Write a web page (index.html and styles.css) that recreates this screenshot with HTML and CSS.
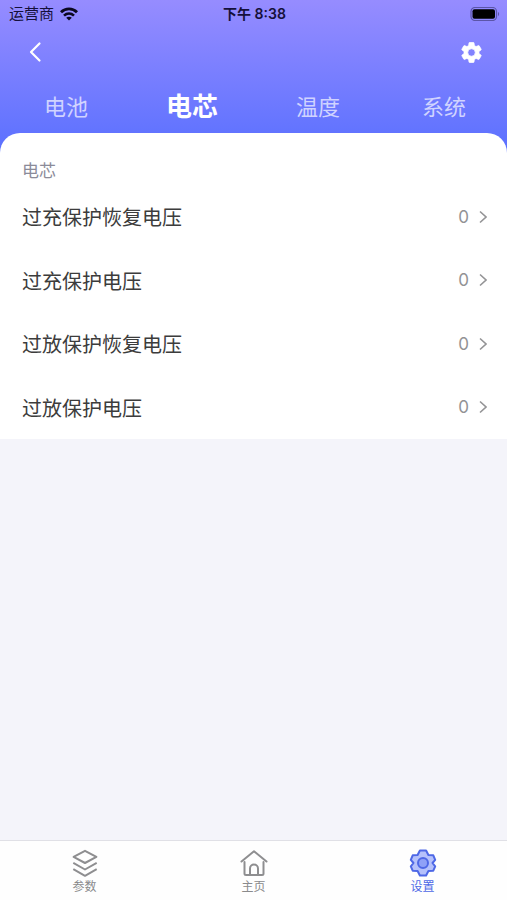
FILE: index.html
```html
<!DOCTYPE html>
<html lang="zh-CN">
<head>
<meta charset="utf-8">
<meta name="viewport" content="width=device-width, initial-scale=1">
<title>电芯</title>
<link rel="stylesheet" href="styles.css">
</head>
<body>
<header class="header">
  <div class="status">
    <div class="carrier">
      <span>运营商</span>
      <svg class="wifi" viewBox="0 0 18 14" aria-hidden="true">
        <path d="M1 5.200C5.600 .8 12.400 .8 17 5.200" fill="none" stroke="#0b0820" stroke-width="2.900"/>
        <path d="M4 8.600C6.900 5.900 11.100 5.900 14 8.600" fill="none" stroke="#0b0820" stroke-width="2.600"/>
        <path d="M9 13.600 6.200 10.800C7.800 9.400 10.200 9.400 11.800 10.800Z" fill="#0b0820"/>
      </svg>
    </div>
    <time class="clock">下午 8:38</time>
    <svg class="battery" viewBox="0 0 30 14" aria-hidden="true">
      <rect x="1" y=".5" width="25.500" height="13" rx="4" fill="none" stroke="#5b55a8" stroke-width="1.200"/>
      <rect x="2.500" y="2.200" width="22.500" height="9.600" rx="2" fill="#000"/>
      <path d="M28 5c1.500.5 1.500 3.500 0 4z" fill="#5b55a8"/>
    </svg>
  </div>
  <div class="bar">
    <button class="icon-button" aria-label="返回">
      <svg width="24" height="24" viewBox="0 0 24 24"><path d="M16.500 3.500 8 12 16.500 20.500" fill="none" stroke="#fff" stroke-width="2.200" stroke-linecap="round" stroke-linejoin="round"/></svg>
    </button>
    <button class="icon-button" aria-label="设置选项">
      <svg width="25" height="25" viewBox="0 0 24 24"><path fill="#fff" stroke="#fff" stroke-width=".7" stroke-linejoin="round" d="M19.140 12.940c.040-.3.060-.61.060-.94s-.02-.64-.07-.94l2.030-1.580c.18-.14.23-.41.12-.61l-1.920-3.320c-.12-.22-.37-.29-.59-.22l-2.390.96c-.5-.38-1.030-.7-1.620-.94l-.36-2.540c-.04-.24-.24-.41-.48-.41h-3.840c-.24 0-.43.17-.47.41l-.36 2.540c-.59.24-1.130.57-1.620.94l-2.390-.96c-.22-.08-.47 0-.59.22L2.740 8.870c-.12.21-.08.47.12.61l2.030 1.580c-.05.3-.09.63-.09.94s.02.64.07.94l-2.030 1.580c-.18.14-.23.41-.12.61l1.920 3.320c.12.22.37.29.59.22l2.390-.96c.5.38 1.030.7 1.620.94l.36 2.540c.05.24.24.41.48.41h3.840c.24 0 .44-.17.47-.41l.36-2.540c.59-.24 1.130-.56 1.620-.94l2.390.96c.22.08.47 0 .59-.22l1.920-3.320c.12-.22.07-.47-.12-.61zM12 15.600a3.600 3.600 0 1 1 0-7.200 3.600 3.600 0 0 1 0 7.200z"/></svg>
    </button>
  </div>
  <nav class="tabs" aria-label="分类">
    <a href="#">电池</a>
    <a href="#" class="active" aria-current="page">电芯</a>
    <a href="#">温度</a>
    <a href="#">系统</a>
  </nav>
</header>
<main class="panel">
  <h1 class="section-title">电芯</h1>
  <div class="rows">
    <button class="row"><span>过充保护恢复电压</span><span class="value">0<svg class="chevron" viewBox="0 0 8 14" aria-hidden="true"><path d="M1 1.500 7 7 1 12.500"/></svg></span></button>
    <button class="row"><span>过充保护电压</span><span class="value">0<svg class="chevron" viewBox="0 0 8 14" aria-hidden="true"><path d="M1 1.500 7 7 1 12.500"/></svg></span></button>
    <button class="row"><span>过放保护恢复电压</span><span class="value">0<svg class="chevron" viewBox="0 0 8 14" aria-hidden="true"><path d="M1 1.500 7 7 1 12.500"/></svg></span></button>
    <button class="row"><span>过放保护电压</span><span class="value">0<svg class="chevron" viewBox="0 0 8 14" aria-hidden="true"><path d="M1 1.500 7 7 1 12.500"/></svg></span></button>
  </div>
</main>
<nav class="tabbar" aria-label="主导航">
  <a href="#">
    <svg viewBox="0 0 28 28" aria-hidden="true"><g fill="none" stroke="#8e8e90" stroke-width="2" stroke-linejoin="round"><path d="M14 1.800 25.400 7.900 14 14 2.600 7.900Z"/><path d="M2.300 13.900 14 20.500 25.700 13.900"/><path d="M2.300 20.200 14 26.800 25.700 20.200"/></g></svg>
    <span>参数</span>
  </a>
  <a href="#">
    <svg viewBox="0 0 28 28" aria-hidden="true"><g fill="none" stroke="#8e8e90" stroke-width="2" stroke-linecap="round" stroke-linejoin="round"><path d="M1.500 12.500 14 2.300 26.500 12.500"/><path d="M4.500 13V24.500Q4.500 26 6 26H22Q23.500 26 23.500 24.500V13"/><path d="M10 25V19.500a4 4 0 0 1 8 0V25"/></g></svg>
    <span>主页</span>
  </a>
  <a href="#" class="active" aria-current="page">
    <svg viewBox="0 0 28 28" aria-hidden="true"><path d="M10.900 1.500H17.100L19.400 6 24.300 6.300 26.200 10.800 23.500 14 26.200 17.400 24.300 21.700 19.400 22 17.100 26.500H10.900L8.600 22 3.700 21.700 1.800 17.400 4.500 14 1.800 10.800 3.700 6.300 8.600 6Z" fill="#b5c1fb" stroke="#4e68e6" stroke-width="2" stroke-linejoin="round"/><circle cx="14" cy="14" r="5" fill="#8fa1f7" stroke="#4e68e6" stroke-width="2"/></svg>
    <span>设置</span>
  </a>
</nav>
</body>
</html>
```
FILE: styles.css
```css
* { box-sizing: border-box; }

body {
  margin: 0;
  min-height: 100vh;
  display: flex;
  flex-direction: column;
  background: #f4f4fa;
  font-family: Inter, "Noto Sans CJK SC", sans-serif;
  color: #3c3c3c;
}

a { color: inherit; text-decoration: none; }

button {
  border: 0;
  padding: 0;
  background: none;
  font: inherit;
  color: inherit;
  cursor: pointer;
}

svg { display: block; }

.header {
  padding-bottom: 20px;
  background: linear-gradient(#968cff, #5a70ff);
}

.status {
  display: grid;
  grid-template-columns: 1fr auto 1fr;
  align-items: center;
  height: 28px;
  padding: 0 7px 0 9px;
  font-size: 15px;
  line-height: 20px;
  color: #15103a;
}

.carrier { display: flex; align-items: center; gap: 6px; }
.wifi { width: 18px; height: 14px; }
.clock { font-size: 14px; font-weight: 600; }
.battery { width: 30px; height: 14px; justify-self: end; }

.bar {
  display: flex;
  justify-content: space-between;
  align-items: center;
  height: 48px;
  padding: 0 23px;
}

.tabs {
  display: grid;
  grid-template-columns: repeat(4, 1fr);
  align-items: center;
  height: 57px;
  padding-left: 3px;
  font-size: 22px;
  text-align: center;
  color: #d0d3ff;
}

.tabs .active { font-size: 26px; font-weight: 700; color: #fff; }

.panel {
  margin-top: -20px;
  border-radius: 20px 20px 0 0;
  background: #fff;
}

.section-title {
  margin: 0;
  padding: 26px 22px 2px;
  font-size: 17px;
  line-height: 24px;
  font-weight: 400;
  color: #8b8b99;
}

.rows { display: grid; grid-auto-rows: 1fr; min-height: 254px; }

.row {
  display: flex;
  justify-content: space-between;
  align-items: center;
  padding: 0 20px 0 22px;
  font-size: 20px;
}

.value {
  display: flex;
  align-items: center;
  gap: 10px;
  font-size: 17px;
  color: #929294;
}

.chevron {
  width: 8px;
  height: 14px;
  fill: none;
  stroke: #949496;
  stroke-width: 1.6;
}

.tabbar {
  display: grid;
  grid-template-columns: repeat(3, 1fr);
  margin-top: auto;
  height: 60px;
  border-top: 1px solid #e0e0e6;
  background: #fefefe;
  font-size: 12px;
  line-height: 16px;
  color: #8a8a8c;
}

.tabbar a {
  display: flex;
  flex-direction: column;
  align-items: center;
  gap: 2px;
  padding-top: 8px;
}

.tabbar svg { width: 28px; height: 28px; }
.tabbar .active { color: #4e68e6; }
```
